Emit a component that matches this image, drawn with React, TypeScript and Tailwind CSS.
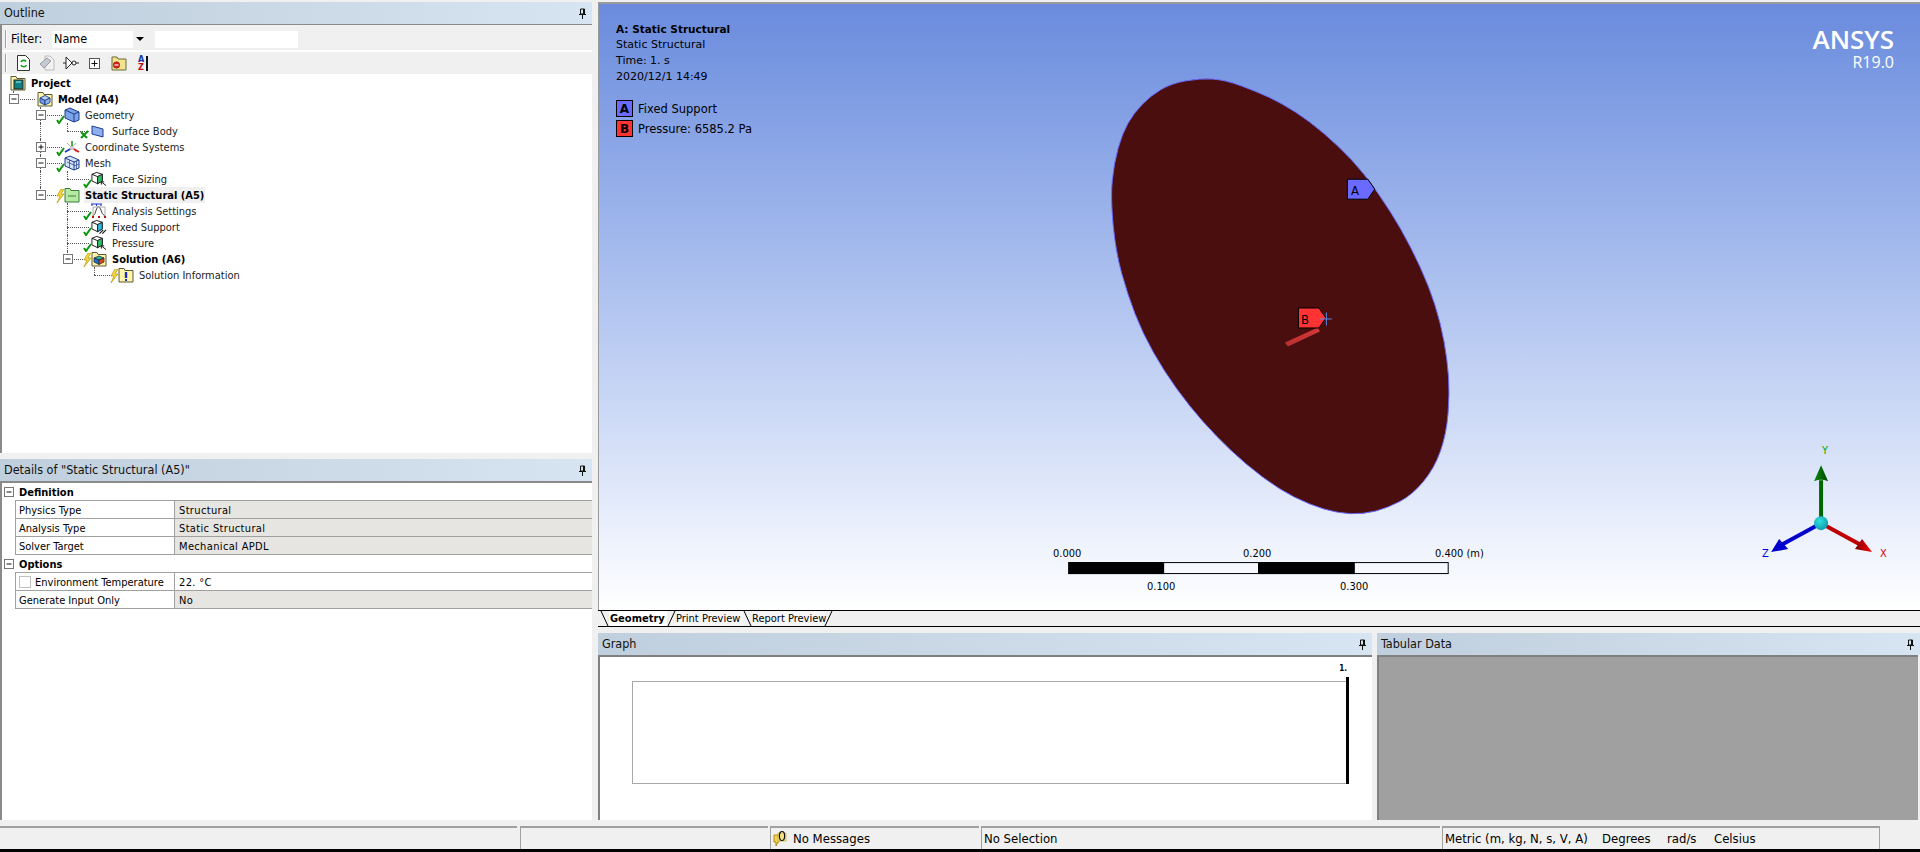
import type { ReactNode } from "react";

const Check = () => (
  <svg width="9" height="9" viewBox="0 0 9 9" className="absolute -left-[8px] top-[8px]">
    <path d="M1 5 L3 8 L8 1" fill="none" stroke="#0a960a" strokeWidth="2" />
  </svg>
);

const CrossCheck = () => (
  <svg width="9" height="9" viewBox="0 0 9 9" className="absolute -left-[11px] top-[7px]">
    <path d="M1 2 L7 8 M8 1 L1 8" fill="none" stroke="#0a960a" strokeWidth="2" />
  </svg>
);

const Bolt = () => (
  <svg width="9" height="14" viewBox="0 0 9 14" className="absolute -left-[8px] top-[2px]">
    <path d="M5 0 L1 7 L4 7 L1 14 L8 5 L5 5 L8 0 Z" fill="#f5d83c" stroke="#b59a10" strokeWidth="0.7" />
  </svg>
);

const Folder = ({ fill = "#fff4a8", children }: { fill?: string; children?: ReactNode }) => (
  <svg width="16" height="16" viewBox="0 0 16 16">
    <path d="M1 3.5 V1.5 H6 L7 3.5 H15 V15 H1 Z" fill={fill} stroke="#5a5a3a" />
    {children}
  </svg>
);

const SmallCube = ({ c = "#6f9be6" }: { c?: string }) => (
  <g stroke="#1c3d8c" strokeWidth="0.9">
    <path d="M3 7 L8 4.5 L13 7 L8 9.5 Z" fill="#bcd2f7" />
    <path d="M3 7 V11.5 L8 14 V9.5 Z" fill={c} />
    <path d="M13 7 V11.5 L8 14 V9.5 Z" fill="#8fb3ee" />
  </g>
);

const CubeIcon = ({ mesh }: { mesh?: boolean }) => (
  <svg width="16" height="16" viewBox="0 0 16 16">
    <path d="M1 3 L6 1 L15 5 V13 L10 15 L1 11 Z" fill={mesh ? "#d6e2f8" : "#7da4e8"} stroke="#1c3d8c" />
    <path d="M1 3 L10 7 V15 M10 7 L15 5" fill="none" stroke="#1c3d8c" />
    {mesh && <path d="M5.5 5 V13 M3 7 L10 10 M10 11 L15 9 M12.5 6 V14" stroke="#1c3d8c" strokeWidth="0.7" fill="none" />}
  </svg>
);

const SurfaceIcon = () => (
  <svg width="13" height="13" viewBox="0 0 13 13">
    <path d="M1 1 L12 4 V12 L1 9 Z" fill="#8fb0ee" stroke="#1c3d8c" />
  </svg>
);

const CoordIcon = () => (
  <svg width="16" height="16" viewBox="0 0 16 16">
    <path d="M8 9 V2" stroke="#0a960a" strokeWidth="1.5" />
    <path d="M8 9 L15 13" stroke="#d81010" strokeWidth="1.5" />
    <path d="M8 9 L1 13" stroke="#1a30c8" strokeWidth="1.5" />
    <path d="M3 4 L12 13 M12 4 L5 12" stroke="#9a9a9a" strokeWidth="0.8" />
    <circle cx="8" cy="9" r="2" fill="#d8c8c8" />
  </svg>
);

const WhiteCube = ({ c = "#35b8c8", badge }: { c?: string; badge?: "arrow" | "hatch" }) => (
  <svg width="17" height="16" viewBox="0 0 17 16">
    <path d="M1 3 L6 1 L12 3 V10 L7 13 L1 10 Z" fill="#fff" stroke="#111" />
    <path d="M1 3 L7 5.5 L12 3 M7 5.5 V13" fill="none" stroke="#111" />
    <path d="M7 5.5 L12 3 V10 L7 13 Z" fill={c} stroke="#111" strokeWidth="0.8" />
    {badge === "arrow" && <path d="M11 11 L16 15 M11 11 H14 M11 11 V14" stroke="#111" fill="none" />}
    {badge === "hatch" && <path d="M9 15 L13 11 M12 15 L16 11" stroke="#111" strokeWidth="1.2" fill="none" />}
  </svg>
);

const AnalysisIcon = () => (
  <svg width="16" height="16" viewBox="0 0 16 16">
    <path d="M0 1 H11 M1 1 V3 M5.5 1 V3 M10 1 V3" stroke="#1a30c8" />
    <path d="M2 13 Q4 12 5.5 6 Q7.5 1 9.5 6 Q11 12 14 13" fill="none" stroke="#444" />
    <path d="M2 4 V13 M14 4 V13 M2 4 H14" fill="none" stroke="#aaa" />
    <path d="M1 14 H3 M7 14 H9 M13 14 H15" stroke="#c01010" strokeWidth="2" />
  </svg>
);

const StaticIcon = () => (
  <svg width="16" height="16" viewBox="0 0 16 16">
    <path d="M1 3.5 V1.5 H6 L7 3.5 H15 V15 H1 Z" fill="#b6eaa0" stroke="#3d7a3d" />
    <path d="M4 9 H12" stroke="#3d7a3d" />
  </svg>
);

const SolutionIcon = () => (
  <Folder>
    <path d="M3 7 L8 5 L13 7 L8 9 Z" fill="#2cb5a0" stroke="#222" strokeWidth="0.7" />
    <path d="M3 7 V11 L8 13.5 V9 Z" fill="#1f6fd0" stroke="#222" strokeWidth="0.7" />
    <path d="M13 7 V11 L8 13.5 V9 Z" fill="#d84a20" stroke="#222" strokeWidth="0.7" />
  </Folder>
);

const InfoIcon = () => (
  <Folder>
    <path d="M8 5 V11" stroke="#1a30c8" strokeWidth="2.4" />
    <path d="M8 12 V14" stroke="#1a30c8" strokeWidth="2" />
  </Folder>
);

const Pin = () => (
  <svg width="9" height="11" viewBox="0 0 9 11">
    <path d="M2.5 1 H6.5 V6 H2.5 Z M1 6.5 H8 M4.5 7 V11" fill="none" stroke="#111" />
    <path d="M5.5 1 V6" stroke="#111" />
  </svg>
);

const BoxToggle = ({ plus }: { plus?: boolean }) => (
  <svg width="10" height="10" viewBox="0 0 10 10">
    <rect x="0.5" y="0.5" width="9" height="9" fill="#fff" stroke="#777" />
    <path d={plus ? "M2.5 5 H7.5 M5 2.5 V7.5" : "M2.5 5 H7.5"} stroke="#111" />
  </svg>
);

type Guide = "" | "pipe" | "tee" | "elbow";

const GuideCell = ({ kind, toggle }: { kind: Guide; toggle?: "plus" | "minus" }) => (
  <div className="relative h-4 w-[27px] shrink-0">
    {(kind === "pipe" || kind === "tee") && (
      <div className="absolute left-[13px] top-0 h-4 border-l border-dotted border-[#555]" />
    )}
    {kind === "elbow" && <div className="absolute left-[13px] top-0 h-2 border-l border-dotted border-[#555]" />}
    {(kind === "tee" || kind === "elbow") && (
      <div className="absolute left-[13px] top-[8px] w-[22px] border-t border-dotted border-[#555]" />
    )}
    {toggle && (
      <div className="absolute left-[9px] top-[3px] flex">
        <BoxToggle plus={toggle === "plus"} />
      </div>
    )}
  </div>
);

type Node = {
  label: string;
  guides: Guide[];
  toggle?: "plus" | "minus";
  icon: ReactNode;
  mark?: "check" | "bolt" | "cross";
  bold?: boolean;
  selected?: boolean;
};

const tree: Node[] = [
  {
    label: "Project",
    guides: [],
    bold: true,
    icon: (
      <Folder>
        <rect x="4" y="5" width="9" height="9" fill="#0f7f86" stroke="#222" />
        <path d="M6 7 H11" stroke="#9fe" />
      </Folder>
    ),
  },
  {
    label: "Model (A4)",
    guides: ["elbow"],
    toggle: "minus",
    bold: true,
    icon: (
      <Folder>
        <SmallCube />
      </Folder>
    ),
  },
  { label: "Geometry", guides: ["", "tee"], toggle: "minus", mark: "check", icon: <CubeIcon /> },
  { label: "Surface Body", guides: ["", "pipe", "elbow"], mark: "cross", icon: <SurfaceIcon /> },
  { label: "Coordinate Systems", guides: ["", "tee"], toggle: "plus", mark: "check", icon: <CoordIcon /> },
  { label: "Mesh", guides: ["", "tee"], toggle: "minus", mark: "check", icon: <CubeIcon mesh /> },
  { label: "Face Sizing", guides: ["", "pipe", "elbow"], mark: "check", icon: <WhiteCube c="#34c060" badge="arrow" /> },
  {
    label: "Static Structural (A5)",
    guides: ["", "elbow"],
    toggle: "minus",
    mark: "bolt",
    bold: true,
    selected: true,
    icon: <StaticIcon />,
  },
  { label: "Analysis Settings", guides: ["", "", "tee"], mark: "check", icon: <AnalysisIcon /> },
  { label: "Fixed Support", guides: ["", "", "tee"], mark: "check", icon: <WhiteCube c="#30b8e8" badge="hatch" /> },
  { label: "Pressure", guides: ["", "", "tee"], mark: "check", icon: <WhiteCube c="#34c060" badge="arrow" /> },
  { label: "Solution (A6)", guides: ["", "", "elbow"], toggle: "minus", mark: "bolt", bold: true, icon: <SolutionIcon /> },
  { label: "Solution Information", guides: ["", "", "", "elbow"], mark: "bolt", icon: <InfoIcon /> },
];

const TreeRow = ({ node }: { node: Node }) => (
  <div className="flex h-4 items-center">
    {node.guides.map((g, i) => (
      <GuideCell key={i} kind={g} toggle={i === node.guides.length - 1 ? node.toggle : undefined} />
    ))}
    <div className="relative ml-[10px] flex h-4 w-[16px] shrink-0 items-center">
      {node.icon}
      {node.mark === "check" && <Check />}
      {node.mark === "cross" && <CrossCheck />}
      {node.mark === "bolt" && <Bolt />}
    </div>
    <span
      className={`ml-[4px] flex h-4 items-center whitespace-nowrap px-[1px] ${node.bold ? "font-bold text-black" : "text-[#1c1c1c]"} ${node.selected ? "bg-[#f0f0f0]" : ""}`}
    >
      {node.label}
    </span>
  </div>
);

const PanelHeader = ({ title }: { title: string }) => (
  <div className="flex h-[22px] shrink-0 items-center justify-between bg-gradient-to-r from-[#c0cfdd] to-[#d7e4f1] pl-[4px] pr-[5px] pt-[1px] text-[12.5px] text-[#111]">
    <span>{title}</span>
    <Pin />
  </div>
);

const Grip = ({ className }: { className: string }) => (
  <div className={`ml-[3px] h-[18px] w-[2px] shrink-0 border-l border-[#a0a0a0] bg-white ${className}`} />
);

const toolbarIcons: { w: number; el: ReactNode }[] = [
  {
    w: 22,
    el: (
      <svg width="13" height="16" viewBox="0 0 13 16">
        <path d="M0.5 0.5 H8.5 L12.5 4.5 V15.5 H0.5 Z" fill="#fff" stroke="#333" />
        <path d="M4 7 A3 3 0 0 1 9 6.5 M9.5 10 A3 3 0 0 1 4 10" fill="none" stroke="#14a014" strokeWidth="1.6" />
      </svg>
    ),
  },
  {
    w: 24,
    el: (
      <svg width="16" height="16" viewBox="0 0 16 16">
        <path d="M6 1 H11 L15 5 V15 H6 Z" fill="#f2f2f2" stroke="#bbb" />
        <path d="M1 9 L8 3 L12 6 L5 13 Z" fill="#c4cbd6" stroke="#9a9a9a" />
      </svg>
    ),
  },
  {
    w: 26,
    el: (
      <svg width="16" height="14" viewBox="0 0 16 14">
        <path d="M0 7 H3 M3 1 L9 7 L3 13 Z" fill="#fff" stroke="#222" />
        <circle cx="11" cy="7" r="2" fill="#fff" stroke="#222" />
        <path d="M13 7 H16" stroke="#222" />
      </svg>
    ),
  },
  {
    w: 22,
    el: (
      <svg width="11" height="11" viewBox="0 0 11 11">
        <rect x="0.5" y="0.5" width="10" height="10" fill="#fff" stroke="#555" />
        <path d="M2.5 5.5 H8.5 M5.5 2.5 V8.5" stroke="#111" />
      </svg>
    ),
  },
  {
    w: 27,
    el: (
      <svg width="16" height="15" viewBox="0 0 16 15">
        <path d="M1 3 V1 H6 L7 3 H15 V14 H1 Z" fill="#f2e48c" stroke="#6a6a3a" />
        <circle cx="5.5" cy="9" r="3.2" fill="#e02020" stroke="#7a1010" strokeWidth="0.6" />
        <path d="M3.5 9 H7.5" stroke="#fff" strokeWidth="1.2" />
      </svg>
    ),
  },
];

const detailRows = [
  { section: "Definition" },
  { label: "Physics Type", value: "Structural", shaded: true },
  { label: "Analysis Type", value: "Static Structural", shaded: true },
  { label: "Solver Target", value: "Mechanical APDL", shaded: true },
  { section: "Options" },
  { label: "Environment Temperature", value: "22. °C", box: true },
  { label: "Generate Input Only", value: "No", shaded: true },
];

// body outline traced off the reference, in a 3x crop starting at (1100, 70)
const bodyPoints = [
  [300, 22], [375, 27], [470, 62], [545, 97], [630, 152], [718, 228], [793, 308], [873, 423], [933, 528],
  [988, 648], [1023, 758], [1043, 868], [1050, 970], [1040, 1092], [1004, 1194], [938, 1274], [862, 1314],
  [790, 1332], [713, 1329], [628, 1303], [538, 1258], [438, 1183], [348, 1098], [268, 1008], [192, 903],
  [127, 788], [82, 672], [46, 542], [31, 380], [41, 278], [66, 188], [101, 126], [152, 74], [213, 38],
].map(([x, y]) => [1100 + x / 3, 70 + y / 3]);

// rounds the traced points off by running through the midpoints of its segments
const bodyPath = bodyPoints
  .map(([x, y], i) => {
    const [nx, ny] = bodyPoints[(i + 1) % bodyPoints.length];
    const mid = `${(x + nx) / 2} ${(y + ny) / 2}`;
    return i === 0 ? `M${mid}` : `Q${x} ${y} ${mid}`;
  })
  .join(" ");
const bodyClose = (() => {
  const [x, y] = bodyPoints[0];
  const [nx, ny] = bodyPoints[1];
  return `Q${x} ${y} ${(x + nx) / 2} ${(y + ny) / 2} Z`;
})();

const Model = () => (
  <svg viewBox="599 3 1321 607" className="absolute inset-0 h-full w-full">
    <defs>
      <linearGradient id="arrow-red" x1="0" y1="1" x2="1" y2="0">
        <stop offset="0" stopColor="#b83030" />
        <stop offset="1" stopColor="#d83838" />
      </linearGradient>
      <radialGradient id="ball" cx="0.4" cy="0.35" r="0.7">
        <stop offset="0" stopColor="#30e0e0" />
        <stop offset="1" stopColor="#0e98a8" />
      </radialGradient>
      <linearGradient id="x-head" x1="0" y1="0" x2="1" y2="0">
        <stop offset="0" stopColor="#7a0000" />
        <stop offset="1" stopColor="#ff0000" />
      </linearGradient>
      <linearGradient id="y-head" x1="0" y1="0" x2="1" y2="0">
        <stop offset="0" stopColor="#0a8a0a" />
        <stop offset="1" stopColor="#004a00" />
      </linearGradient>
    </defs>
    <path d={`${bodyPath} ${bodyClose}`} fill="#4a0e0e" stroke="#6a6aff" strokeWidth="1" />
    <path d="M1285 342 L1318 327 L1320 331 L1288 346 Z" fill="url(#arrow-red)" />
    <path d="M1347.5 178.5 H1368 L1375 188.5 L1368 198.5 H1347.5 Z" fill="#6a6aff" stroke="#000" />
    <path d="M1298.5 307.5 H1319 L1326 317.5 L1319 327.5 H1298.5 Z" fill="#ff3333" stroke="#000" />
    <path d="M1320 318.5 H1332 M1326.5 312 V325" stroke="#5a8ae8" />
    <rect x="1068.5" y="562.5" width="380" height="11" fill="#f6f8fe" stroke="#000" />
    <rect x="1068" y="562" width="96" height="12" fill="#000" />
    <rect x="1258" y="562" width="97" height="12" fill="#000" />
    <path d="M1822 523 V480" stroke="#006600" strokeWidth="4" />
    <path d="M1822 465 L1815 481 Q1822 478 1829 481 Z" fill="url(#y-head)" />
    <path d="M1822 523 L1862 545" stroke="#c00000" strokeWidth="4" />
    <path d="M1873 552 L1863 539 L1856 549 Z" fill="url(#x-head)" />
    <path d="M1822 523 L1782 545" stroke="#0000cc" strokeWidth="4" />
    <path d="M1772 552 L1780 539 L1789 549 Z" fill="#0000cc" />
    <circle cx="1822" cy="523" r="7" fill="url(#ball)" />
  </svg>
);

const Overlay = ({ x, y, children, className = "" }: { x: number; y: number; children: ReactNode; className?: string }) => (
  <span className={`absolute whitespace-nowrap ${className}`} style={{ left: x - 599, top: y - 3 }}>
    {children}
  </span>
);

const Viewport = () => (
  <div className="relative flex-1 border-l border-t-2 border-[#9a9a9a] bg-gradient-to-b from-[#6a8bdd] to-white text-black">
    <Model />
    <div className="absolute left-[17px] top-[17px] font-['DejaVu_Sans',sans-serif] leading-[16px] [font-stretch:normal]">
      <div className="text-[10.5px] font-bold">A: Static Structural</div>
      <div>Static Structural</div>
      <div>Time: 1. s</div>
      <div>2020/12/1 14:49</div>
      <div className="mt-[15px] flex flex-col gap-[3px]">
        <div className="flex items-center gap-[5px]">
          <span className="flex h-[17px] w-[17px] items-center justify-center border border-black bg-[#6a6aff] text-[12px] font-bold">A</span>
          <span className="text-[11.5px]">Fixed Support</span>
        </div>
        <div className="flex items-center gap-[5px]">
          <span className="flex h-[17px] w-[17px] items-center justify-center border border-black bg-[#ff3333] text-[12px] font-bold">B</span>
          <span className="text-[11.5px]">Pressure: 6585.2 Pa</span>
        </div>
      </div>
    </div>
    <div className="absolute right-[26px] top-[20px] flex flex-col items-end text-white">
      <span className="font-['Open_Sans',sans-serif] text-[26px] font-semibold leading-[30px] [font-stretch:normal]">ANSYS</span>
      <span className="font-['Open_Sans',sans-serif] text-[16px] leading-[16px] [font-stretch:normal]">R19.0</span>
    </div>
    <Overlay x={1351} y={183} className="text-[13px]">A</Overlay>
    <Overlay x={1301} y={312} className="text-[13px]">B</Overlay>
    <Overlay x={1053} y={547}>0.000</Overlay>
    <Overlay x={1243} y={547}>0.200</Overlay>
    <Overlay x={1435} y={547}>0.400 (m)</Overlay>
    <Overlay x={1147} y={580}>0.100</Overlay>
    <Overlay x={1340} y={580}>0.300</Overlay>
    <Overlay x={1822} y={444} className="text-[#00aa00]">Y</Overlay>
    <Overlay x={1880} y={547} className="text-[#e00000]">X</Overlay>
    <Overlay x={1762} y={547} className="text-[#0000e0]">Z</Overlay>
  </div>
);

const TabSlant = ({ flip }: { flip?: boolean }) => (
  <svg width="9" height="15" viewBox="0 0 9 15" className="shrink-0">
    <path d={flip ? "M1 15 L8 0" : "M1 0 L8 15"} stroke="#000" fill="none" />
  </svg>
);

const TabBar = () => (
  <div className="flex h-[17px] shrink-0 items-center whitespace-nowrap border-y border-black bg-[#f0f0f0] pl-[2px]">
    <TabSlant />
    <span className="flex h-full w-[58px] items-center bg-white pl-[1px] font-bold">Geometry</span>
    <TabSlant flip />
    <span className="flex h-full w-[67px] items-center bg-[#f6f6f6]">Print Preview</span>
    <TabSlant />
    <span className="flex h-full w-[72px] items-center bg-[#f6f6f6]">Report Preview</span>
    <TabSlant flip />
  </div>
);

const StatusCell = ({ w, children, className = "" }: { w: string; children?: ReactNode; className?: string }) => (
  <div className={`flex h-full items-center border-l border-t-2 border-[#a0a0a0] pl-[2px] ${w} ${className}`}>{children}</div>
);

export default function App() {
  return (
    <div className="flex h-[852px] w-[1920px] flex-col overflow-hidden bg-[#f0f0f0] font-['DejaVu_Sans_Condensed','DejaVu_Sans',sans-serif] text-[11px] leading-none [font-stretch:condensed]">
      <div className="flex min-h-0 flex-1 pt-[2px]">
        {/* left column */}
        <div className="flex w-[592px] shrink-0 flex-col">
          <PanelHeader title="Outline" />
          <div className="flex h-[429px] flex-col border-l-2 border-t border-[#8a8a8a] bg-white">
            <div className="flex h-[27px] shrink-0 items-center border-b-2 border-white bg-[#f0f0f0] pt-[3px] text-black">
              <Grip className="mr-[4px]" />
              <span className="w-[41px] text-[12.5px]">Filter:</span>
              <div className="flex h-[17px] w-[95px] items-center justify-between bg-white pl-[2px] text-[12.5px]">
                <span>Name</span>
                <span className="flex h-full w-[14px] items-center justify-center bg-[#f0f0f0]">
                  <span className="h-0 w-0 border-x-[4px] border-t-[4px] border-x-transparent border-t-black" />
                </span>
              </div>
              <div className="ml-[8px] h-[17px] w-[143px] bg-white" />
            </div>
            <div className="flex h-[22px] shrink-0 items-center bg-[#f0f0f0]">
              <Grip className="mr-[10px]" />
              {toolbarIcons.map((t, i) => (
                <div key={i} className="flex items-center" style={{ width: t.w }}>
                  {t.el}
                </div>
              ))}
              <div className="flex w-[8px] flex-col text-[9px] font-bold leading-[8px]">
                <span className="text-[#1a30a8]">A</span>
                <span className="text-[#c01010]">Z</span>
              </div>
              <span className="h-[15px] w-[2px] bg-[#111]" />
            </div>
            <div className="-ml-[2px] pt-[1px]">
              {tree.map((n) => (
                <TreeRow key={n.label} node={n} />
              ))}
            </div>
          </div>
          <div className="h-[6px] shrink-0" />
          <PanelHeader title={'Details of "Static Structural (A5)"'} />
          <div className="flex-1 border-l-2 border-t-2 border-[#8a8a8a] bg-white">
            {detailRows.map((r) =>
              r.section ? (
                <div key={r.section} className="flex h-[18px] items-center">
                  <div className="flex w-[13px] shrink-0 justify-center">
                    <BoxToggle />
                  </div>
                  <div className="flex h-full flex-1 items-center border-b border-[#a0a0a0] pl-[4px] pt-[1px] font-bold text-black">
                    {r.section}
                  </div>
                </div>
              ) : (
                <div key={r.label} className="flex h-[18px] pl-[13px]">
                  <div className="flex h-full w-[160px] shrink-0 items-center border-b border-l border-r border-[#a0a0a0] pl-[3px] pt-[1px] text-black">
                    {r.box && <span className="mr-[4px] h-[12px] w-[12px] border border-[#c0c0c0] bg-white" />}
                    {r.label}
                  </div>
                  <div className={`flex h-full flex-1 items-center border-b border-[#a0a0a0] pl-[4px] pt-[1px] tracking-[0.35px] text-black ${r.shaded ? "bg-[#e6e5e1]" : ""}`}>
                    {r.value}
                  </div>
                </div>
              ),
            )}
          </div>
        </div>
        {/* right column */}
        <div className="ml-[6px] flex min-w-0 flex-1 flex-col">
          <Viewport />
          <TabBar />
          <div className="h-[6px] shrink-0" />
          <div className="flex h-[187px] shrink-0 gap-[5px]">
            <div className="flex w-[774px] shrink-0 flex-col">
              <PanelHeader title="Graph" />
              <div className="flex flex-1 flex-col border-l-2 border-t-2 border-[#808080] bg-white pl-[32px] pr-[23px]">
                <div className="flex h-[24px] items-start justify-end pt-[8px] text-[8px] font-bold leading-none">
                  <span className="mr-[2px]">1.</span>
                </div>
                <div className="relative h-[103px] border-y border-l border-[#a8a8a8]">
                  <div className="absolute -bottom-[1px] -top-[5px] right-0 w-[3px] bg-black" />
                </div>
              </div>
            </div>
            <div className="flex flex-1 flex-col">
              <PanelHeader title="Tabular Data" />
              <div className="mr-[2px] flex-1 border-l-2 border-t-2 border-[#808080] bg-[#a0a0a0]" />
            </div>
          </div>
        </div>
      </div>
      {/* status bar */}
      <div className="mt-[6px] flex h-[23px] shrink-0 items-center text-[13px] text-black">
        <div className="h-full w-[517px] border-t-2 border-[#a0a0a0]" />
        <StatusCell w="w-[248px]" className="ml-[3px]" />
        <StatusCell w="w-[209px]" className="ml-[2px]">
          <svg width="17" height="17" viewBox="0 0 17 17" className="mr-[3px]">
            <path d="M1 5 H6 V12 H5 L3 16 V12 H1 Z" fill="#f4d24a" stroke="#b08c10" />
            <path d="M5 3 H13 V11 H5 Z" fill="#f8e48a" stroke="#c8a020" strokeWidth="0.6" />
            <ellipse cx="9" cy="6" rx="2.6" ry="4.5" fill="none" stroke="#111" strokeWidth="1.2" />
          </svg>
          No Messages
        </StatusCell>
        <StatusCell w="w-[459px]" className="ml-[2px]">No Selection</StatusCell>
        <StatusCell w="w-[438px]" className="ml-[2px] border-r">
          <span className="w-[157px]">Metric (m, kg, N, s, V, A)</span>
          <span className="w-[65px]">Degrees</span>
          <span className="w-[47px]">rad/s</span>
          <span>Celsius</span>
        </StatusCell>
      </div>
      <div className="h-[3px] shrink-0 bg-black" />
    </div>
  );
}
